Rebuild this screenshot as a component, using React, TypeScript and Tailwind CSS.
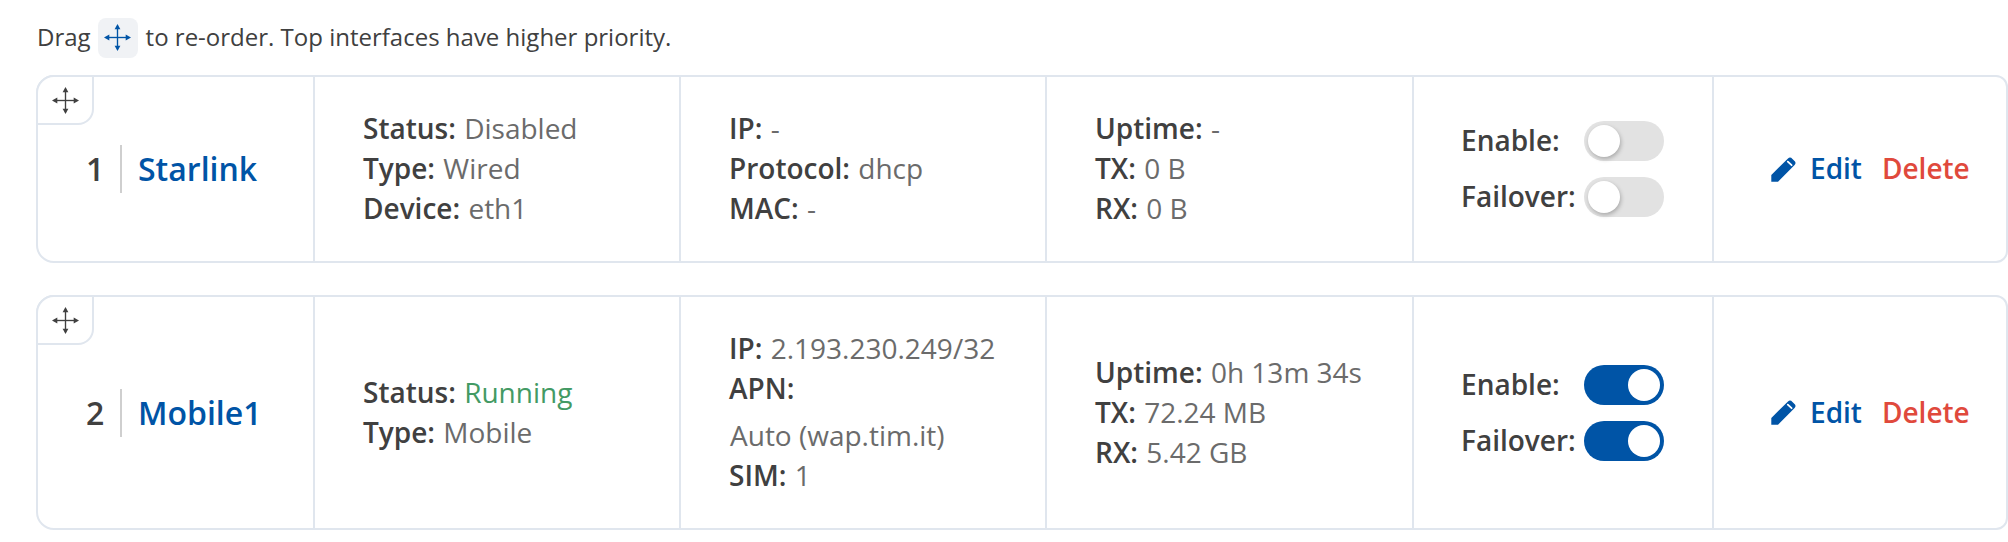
import React from "react";

function MoveIcon({ className }: { className: string }) {
  return (
    <svg viewBox="0 0 28 28" className={className} fill="currentColor">
      <rect x="13.3" y="3" width="1.4" height="22" />
      <rect x="3" y="13.3" width="22" height="1.4" />
      <path d="M14 0 L17 5.5 L11 5.5 Z" />
      <path d="M14 28 L17 22.5 L11 22.5 Z" />
      <path d="M0 14 L5.5 11 L5.5 17 Z" />
      <path d="M28 14 L22.5 11 L22.5 17 Z" />
    </svg>
  );
}

function PencilIcon({ className }: { className: string }) {
  return (
    <svg viewBox="0 0 25 25" className={className} fill="currentColor">
      <path d="M0.3 24.7 L0.3 18 L17 1.4 Q18.6 -0.2 20.2 0.8 L24 4.6 Q25.2 6.2 23.6 7.9 L7 24.7 Z" />
      <path d="M16.8 4.6 L20.6 8.2" stroke="#ffffff" strokeWidth="1.8" strokeLinecap="round" fill="none" />
    </svg>
  );
}

function Toggle({ on }: { on: boolean }) {
  return on ? (
    <span className="flex h-10 w-20 items-center justify-end rounded-full bg-[#0054a6] p-1">
      <span className="h-8 w-8 rounded-full bg-white" />
    </span>
  ) : (
    <span className="flex h-10 w-20 items-center justify-start rounded-full bg-[#e2e2e2] p-1">
      <span className="h-8 w-8 rounded-full bg-white shadow-[1px_2px_4px_rgba(0,0,0,0.25)]" />
    </span>
  );
}

function Line({ label, value, valueClass = "text-[#6b6b6b]" }: { label: string; value?: string; valueClass?: string }) {
  return (
    <div className="h-10 whitespace-nowrap leading-[38px]">
      <span className="font-semibold text-[#404040]">{label}</span>
      {value ? <span className={`ml-px ${valueClass}`}> {value}</span> : null}
    </div>
  );
}

type Row = [string, string];

function Cell({ children, className = "" }: { children: React.ReactNode; className?: string }) {
  return <div className={`flex flex-col justify-center border-l-2 border-[#e0e6ee] ${className}`}>{children}</div>;
}

function Card({
  index,
  name,
  status,
  net,
  stats,
  on,
  height,
}: {
  index: number;
  name: string;
  status: React.ReactNode;
  net: React.ReactNode;
  stats: Row[];
  on: boolean;
  height: string;
}) {
  return (
    <div className={`relative grid grid-cols-[275px_366px_366px_367px_300px_1fr] rounded-l-[18px] rounded-r-[12px] border-2 border-[#e0e6ee] bg-white ${height}`}>
      <div className="absolute -left-0.5 -top-0.5 flex h-[50px] w-[58px] items-center justify-center rounded-br-[16px] rounded-tl-[18px] border-2 border-[#e0e6ee] bg-white text-[#404040]">
        <MoveIcon className="h-[27px] w-[27px]" />
      </div>
      <div className="flex items-center pl-[48px]">
        <span className="w-[34px] text-[32px] font-semibold leading-none text-[#404040]">{index}</span>
        <span className="flex h-12 items-center border-l-2 border-[#cfcfcf] pl-4 text-[32px] font-semibold text-[#0054a6]">{name}</span>
      </div>
      <Cell className="pl-[48px]">{status}</Cell>
      <Cell className="pl-[48px]">{net}</Cell>
      <Cell className="pl-[48px]">
        {stats.map(([l, v]) => (
          <Line key={l} label={l} value={v} />
        ))}
      </Cell>
      <Cell className="gap-4 pl-[47px]">
        <div className="flex h-10 items-center font-semibold text-[#404040]">
          <span className="w-[123px] pb-0.5">Enable:</span>
          <Toggle on={on} />
        </div>
        <div className="flex h-10 items-center font-semibold text-[#404040]">
          <span className="w-[123px] pb-0.5">Failover:</span>
          <Toggle on={on} />
        </div>
      </Cell>
      <div className="flex items-center border-l-2 border-[#e0e6ee] pl-[57px] font-semibold">
        <PencilIcon className="mr-[14px] h-[25px] w-[25px] text-[#0054a6]" />
        <span className="pb-0.5 text-[#0054a6]">Edit</span>
        <span className="ml-5 pb-0.5 text-[#e0493c]">Delete</span>
      </div>
    </div>
  );
}

export default function App() {
  return (
    <div className="h-[542px] w-[2008px] overflow-hidden bg-white pl-[36px] font-['Open_Sans','Noto_Sans',sans-serif] text-[28px]">
      <div className="flex h-[75px] items-center pl-px text-[24px] text-[#404040]">
        <span className="pb-0.5">Drag</span>
        <span className="ml-[7px] mr-2 flex h-10 w-10 items-center justify-center rounded-lg bg-[#f0f2f5] text-[#0054a6]">
          <MoveIcon className="h-[27px] w-[27px]" />
        </span>
        <span className="pb-0.5">to re-order. Top interfaces have higher priority.</span>
      </div>
      <Card
        index={1}
        name="Starlink"
        height="h-[188px]"
        on={false}
        status={
          <>
            <Line label="Status:" value="Disabled" />
            <Line label="Type:" value="Wired" />
            <Line label="Device:" value="eth1" />
          </>
        }
        net={
          <>
            <Line label="IP:" value="-" />
            <Line label="Protocol:" value="dhcp" />
            <Line label="MAC:" value="-" />
          </>
        }
        stats={[
          ["Uptime:", "-"],
          ["TX:", "0 B"],
          ["RX:", "0 B"],
        ]}
      />
      <div className="h-[32px]" />
      <Card
        index={2}
        name="Mobile1"
        height="h-[235px]"
        on={true}
        status={
          <>
            <Line label="Status:" value="Running" valueClass="text-[#439a64]" />
            <Line label="Type:" value="Mobile" />
          </>
        }
        net={
          <>
            <Line label="IP:" value="2.193.230.249/32" />
            <Line label="APN:" />
            <div className="h-[7px]" />
            <Line label="" value="Auto (wap.tim.it)" />
            <Line label="SIM:" value="1" />
          </>
        }
        stats={[
          ["Uptime:", "0h 13m 34s"],
          ["TX:", "72.24 MB"],
          ["RX:", "5.42 GB"],
        ]}
      />
    </div>
  );
}
